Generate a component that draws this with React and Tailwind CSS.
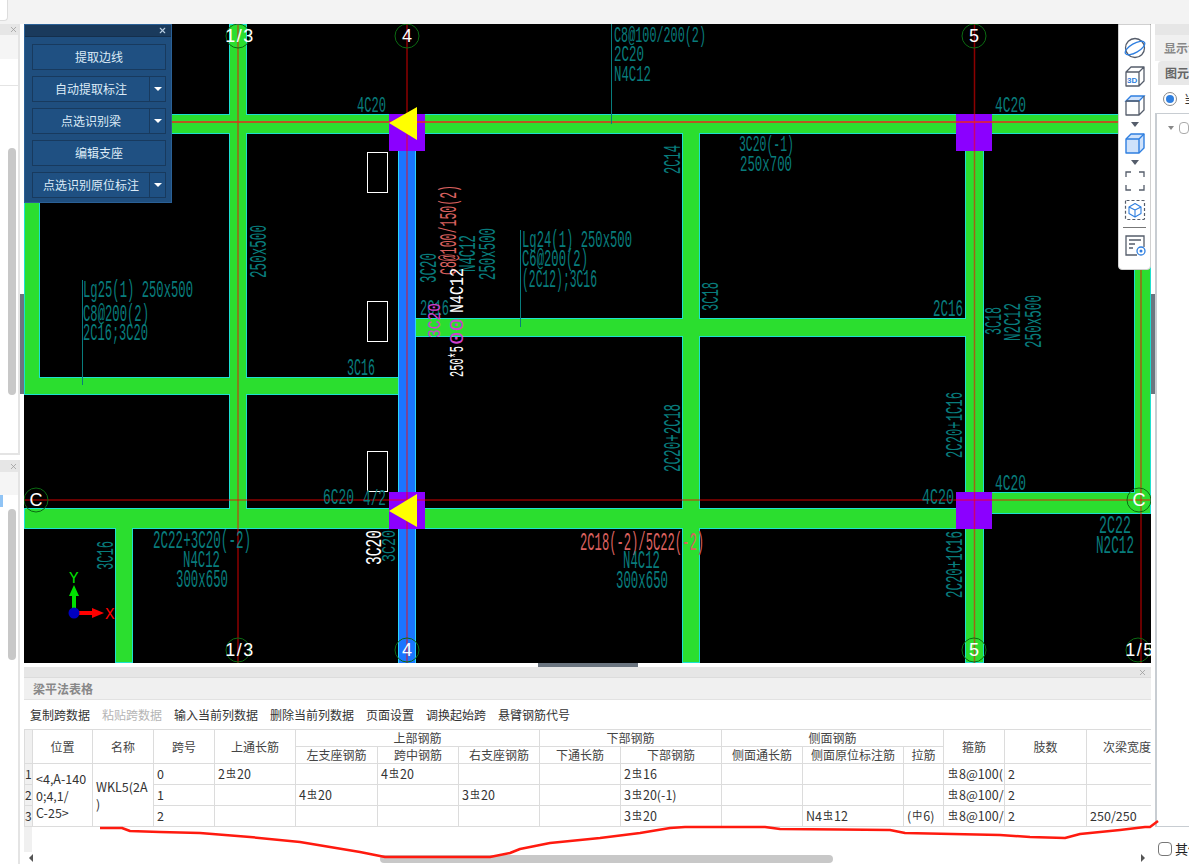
import { X } from "lucide-react";

const TEAL = "#087c7c";
const RED = "#d9605f";
const MAGENTA = "#d040d0";

// x, y, w, h in screen coordinates
const beams = [
  [24, 114, 1127, 20],
  [229, 24, 18, 505],
  [24, 130, 16, 265],
  [24, 377, 376, 18],
  [24, 508, 936, 21],
  [115, 525, 18, 138],
  [682, 130, 18, 533],
  [412, 318, 557, 19],
  [965, 130, 19, 533],
  [988, 492, 163, 22],
  [1134, 130, 17, 384],
];

// text, x0, x1, y0, y1
const labels = [
  ["4C20", 357, 386, 98, 112],
  ["4C20", 995, 1026, 98, 112],
  ["C8@100/200(2)", 614, 706, 27, 42],
  ["2C20", 614, 644, 46, 61],
  ["N4C12", 614, 651, 66, 81],
  ["3C20(-1)", 739, 794, 136, 151],
  ["250x700", 740, 792, 156, 171],
  ["Lg24(1) 250x500", 522, 632, 231, 247],
  ["C6@200(2)", 522, 588, 250, 266],
  ["(2C12);3C16", 522, 597, 270, 287],
  ["Lg25(1) 250x500", 83, 193, 281, 297],
  ["C8@200(2)", 83, 149, 305, 321],
  ["2C16;3C20", 83, 148, 324, 340],
  ["3C16", 347, 375, 359, 375],
  ["2C16", 933, 963, 300, 316],
  ["2C16", 420, 449, 300, 315],
  ["4C20", 995, 1026, 475, 490],
  ["4C20", 922, 954, 489, 504],
  ["6C20", 323, 354, 489, 504],
  ["4/2", 363, 386, 490, 505],
  ["2C22+3C20(-2)", 153, 251, 531, 548],
  ["N4C12", 183, 220, 551, 567],
  ["300x650", 176, 228, 570, 587],
  ["2C18(-2)/5C22(-2)", 580, 704, 533, 550, RED],
  ["N4C12", 623, 660, 551, 568],
  ["300x650", 616, 668, 571, 588],
  ["2C22", 1099, 1131, 516, 533],
  ["N2C12", 1096, 1134, 536, 553],
];

const sideLabels = [
  ["250x500", 250, 266, 225, 278],
  ["3C16", 97, 113, 541, 570],
  ["2C14", 664, 680, 145, 174],
  ["3C18", 702, 718, 282, 311],
  ["2C20+2C18", 664, 680, 404, 472],
  ["3C20", 420, 436, 253, 283],
  ["C8@100/150(2)", 440, 456, 185, 275, RED],
  ["N4C12", 459, 475, 235, 272],
  ["250x500", 479, 495, 228, 280],
  ["3C20", 428, 440, 303, 338, MAGENTA],
  ["N4C12", 450, 463, 268, 313, "#ffffff"],
  ["00", 450, 463, 318, 345, MAGENTA],
  ["250*5", 450, 463, 346, 377, "#ffffff"],
  ["3C20", 367, 381, 530, 565, "#ffffff"],
  ["3C20", 382, 395, 530, 562],
  ["3C18", 985, 1001, 307, 335],
  ["N2C12", 1004, 1020, 303, 341],
  ["250x500", 1025, 1041, 295, 348],
  ["2C20+1C16", 946, 962, 392, 458],
  ["2C20+1C16", 946, 962, 531, 598],
];

const axes = [
  ["1/3", 240, 36],
  ["4", 407, 36],
  ["5", 974, 36],
  ["C", 36, 500],
  ["C", 1139, 500],
  ["1/3", 240, 650],
  ["4", 407, 650],
  ["5", 974, 650],
  ["1/5", 1140, 650],
];

const CadText = ({ text, x0, x1, y0, y1, color, side }) => {
  const size = side ? x1 - x0 : y1 - y0;
  const len = side ? y1 - y0 : x1 - x0;
  const transform = side ? `translate(${x1},${y1}) rotate(-90)` : `translate(${x0},${y1})`;
  return (
    <text
      transform={transform}
      fontSize={size / 0.66}
      fill={color || TEAL}
      textLength={len}
      lengthAdjust="spacingAndGlyphs"
      className="font-['Liberation_Mono',monospace]"
    >
      {text}
    </text>
  );
};

const Drawing = () => (
  <svg viewBox="24 24 1127 639" className="block w-[1127px] h-[639px]">
    {beams.map(([x, y, w, h], i) => (
      <rect key={i} x={x} y={y} width={w} height={h} fill="#1de0d0" />
    ))}
    {beams.map(([x, y, w, h], i) => (
      <rect key={i} x={x + 1} y={y + 1} width={w - 2} height={h - 2} fill="#2bde2f" />
    ))}

    <rect x="398" y="150" width="18" height="513" fill="#28d4ff" />
    <rect x="399" y="150" width="16" height="513" fill="#1a75ff" />

    <rect x="367.5" y="152.5" width="20" height="40" fill="none" stroke="#fff" />
    <rect x="367.5" y="301.5" width="20" height="40" fill="none" stroke="#fff" />
    <rect x="367.5" y="451.5" width="20" height="40" fill="none" stroke="#fff" />

    <rect x="389" y="114" width="36" height="37" fill="#8b00ff" />
    <rect x="389" y="492" width="36" height="37" fill="#8b00ff" />
    <rect x="956" y="114" width="36" height="37" fill="#8b00ff" />
    <rect x="956" y="492" width="36" height="37" fill="#8b00ff" />

    <g stroke="#ff0000" strokeOpacity="0.55" strokeWidth="1.5">
      <line x1="238" y1="24" x2="238" y2="663" />
      <line x1="407" y1="24" x2="407" y2="663" />
      <line x1="974.5" y1="24" x2="974.5" y2="663" />
      <line x1="1141" y1="24" x2="1141" y2="663" />
      <line x1="24" y1="500" x2="1151" y2="500" />
    </g>
    <line x1="24" y1="122" x2="1151" y2="122" stroke="#e8281e" strokeWidth="1.5" />

    <polygon points="389,123 417,107 417,140" fill="#ffff00" />
    <polygon points="389,511 417,494 417,527" fill="#ffff00" />

    <g stroke={TEAL} strokeWidth="1">
      <line x1="611.5" y1="24" x2="611.5" y2="124" />
      <line x1="520.5" y1="230" x2="520.5" y2="327" />
      <line x1="82.5" y1="280" x2="82.5" y2="385" />
    </g>

    {labels.map(([text, x0, x1, y0, y1, color], i) => (
      <CadText key={i} text={text} x0={x0} x1={x1} y0={y0} y1={y1} color={color} />
    ))}
    {sideLabels.map(([text, x0, x1, y0, y1, color], i) => (
      <CadText key={i} side text={text} x0={x0} x1={x1} y0={y0} y1={y1} color={color} />
    ))}

    {axes.map(([text, x, y], i) => (
      <g key={i}>
        <circle cx={text.length > 1 ? x - 2 : x} cy={y} r="12" fill="none" stroke="#0b6b12" />
        <text
          x={x}
          y={y + 6}
          textAnchor="middle"
          fontSize="18"
          letterSpacing={text.length > 1 ? "1.5" : "0"}
          fill="#fff"
          className="font-['Liberation_Sans',sans-serif]"
        >
          {text}
        </text>
      </g>
    ))}

    <rect x="72" y="590" width="4" height="22" fill="#00e000" />
    <polygon points="74,585 69,596 79,596" fill="#00e000" />
    <rect x="74" y="611" width="20" height="4" fill="#ff0000" />
    <polygon points="104,613 92,608 92,618" fill="#ff0000" />
    <circle cx="74" cy="613" r="5.5" fill="#0000c0" />
    <text x="69" y="583" fontSize="16" fill="#00e000" className="font-['Liberation_Mono',monospace]">Y</text>
    <text x="105" y="619" fontSize="16" fill="#ff0000" className="font-['Liberation_Mono',monospace]">X</text>
  </svg>
);

const PanelButton = ({ label, menu }) => (
  <div className="flex h-[26px] border border-[#183a5e] bg-[#1f5082] text-[#dcebf7]">
    <div className="flex-1 flex items-center justify-center">{label}</div>
    {menu && (
      <div className="w-4 flex items-center justify-center border-l border-[#183a5e]">
        <div className="w-0 h-0 border-x-[4px] border-x-transparent border-t-[4px] border-t-white" />
      </div>
    )}
  </div>
);

const FloatPanel = () => (
  <div className="absolute left-0 top-0 w-[148px] h-[179px] border border-[#2a6096] bg-[#1f4e7e] text-[12px]">
    <div className="h-3 bg-[#1a3a5c] flex items-center justify-end pr-1 border-b border-[#142f4c]">
      <X size={9} color="#b8cde0" strokeWidth={3} />
    </div>
    <div className="flex flex-col gap-[6px] pt-[7px] pl-[7px] pr-[5px]">
      <PanelButton label="提取边线" />
      <PanelButton label="自动提取标注" menu />
      <PanelButton label="点选识别梁" menu />
      <PanelButton label="编辑支座" />
      <PanelButton label="点选识别原位标注" menu />
    </div>
  </div>
);

const Caret = () => (
  <div className="w-0 h-0 mt-[6px] border-x-[4px] border-x-transparent border-t-[5px] border-t-[#555d6b]" />
);

const Toolbar = () => (
  <div className="absolute right-0 top-0 w-[33px] h-[246px] bg-white border border-[#d0d0d0] rounded-b-sm flex flex-col items-center pt-[12px]">
    <svg viewBox="0 0 22 22" className="w-[22px] h-[22px]" fill="none">
      <circle cx="11" cy="11" r="9.5" stroke="#555d6b" strokeWidth="1.3" />
      <ellipse cx="11" cy="11" rx="11" ry="4.5" transform="rotate(-30 11 11)" stroke="#2f7fe0" strokeWidth="1.3" />
    </svg>
    <svg viewBox="0 0 22 22" className="w-[22px] h-[22px] mt-[6px]" fill="none" stroke="#555d6b" strokeWidth="1.3">
      <path d="M2 7 L7 2 H20 V16 L15 21 H2 Z M2 7 H15 V21 M15 7 L20 2" strokeLinejoin="round" />
      <text x="3" y="18" fontSize="8" fontWeight="700" fill="#2f7fe0" stroke="none" className="font-['Liberation_Sans',sans-serif]">3D</text>
    </svg>
    <svg viewBox="0 0 22 22" className="w-[22px] h-[22px] mt-[7px]" fill="none" stroke="#555d6b" strokeWidth="1.3">
      <path d="M2 7 L7 2 H20 L15 7 Z" fill="#cfe2fb" stroke="#2f7fe0" />
      <path d="M2 7 V21 H15 L20 16 V2 M15 7 V21 M2 7 H15" strokeLinejoin="round" />
    </svg>
    <Caret />
    <svg viewBox="0 0 22 22" className="w-[22px] h-[22px] mt-[5px]" fill="#cfe2fb" stroke="#2f7fe0" strokeWidth="1.4">
      <path d="M2 7 L7 2 H20 V16 L15 21 H2 Z" strokeLinejoin="round" />
      <path d="M2 7 H15 V21 M15 7 L20 2" fill="none" />
    </svg>
    <Caret />
    <svg viewBox="0 0 22 22" className="w-[22px] h-[22px] mt-[5px]" fill="none" stroke="#555d6b" strokeWidth="1.3">
      <path d="M2 7 V2 H7 M15 2 H20 V7 M20 15 V20 H15 M7 20 H2 V15" />
    </svg>
    <svg viewBox="0 0 22 22" className="w-[22px] h-[22px] mt-[7px]" fill="none">
      <rect x="1.5" y="1.5" width="19" height="19" rx="1" stroke="#555d6b" strokeWidth="1.2" strokeDasharray="3 2" />
      <path d="M11 4.5 L17 8 V14.5 L11 18 L5 14.5 V8 Z M5 8 L11 11 L17 8 M11 11 V18" stroke="#2f7fe0" strokeWidth="1.1" strokeLinejoin="round" />
    </svg>
    <div className="w-[23px] h-px bg-[#777] mt-[6px]" />
    <svg viewBox="0 0 22 22" className="w-[22px] h-[22px] mt-[6px]" fill="none" stroke="#555d6b" strokeWidth="1.3">
      <path d="M13 21 H2 V2 H20 V13" />
      <path d="M5 6 H17 M5 10 H11 M5 14 H9" />
      <circle cx="17" cy="17" r="4" stroke="#2f7fe0" />
      <circle cx="17" cy="17" r="1.5" fill="#2f7fe0" stroke="none" />
    </svg>
  </div>
);

const Bar = ({ n, tail }) => (
  <span>
    {n}
    <span className="text-[10px] leading-[10px] align-[2px] mx-px">虫</span>
    {tail}
  </span>
);

const th = "border border-[#dcdcdc] font-normal text-[12px] leading-[16px] text-[#444] text-center p-0 overflow-hidden whitespace-nowrap";
const td = "border border-[#dcdcdc] text-[12.5px] leading-[18px] text-[#333] px-[3px] py-0 h-[21px] overflow-hidden whitespace-nowrap";
const num = "border border-[#dcdcdc] bg-[#f0f0f0] text-[12px] leading-[18px] text-[#333] p-0 overflow-hidden";
const tall = "border border-[#dcdcdc] text-[12.5px] text-[#333] px-[3px] py-0 leading-[17px] whitespace-nowrap overflow-hidden";

const BeamTable = () => (
  <div className="h-[98px] overflow-hidden">
    <table className="table-fixed border-collapse w-[1143px]">
      <colgroup>
        <col className="w-[8px]" />
        <col className="w-[60px]" />
        <col className="w-[61px]" />
        <col className="w-[61px]" />
        <col className="w-[81px]" />
        <col className="w-[82px]" />
        <col className="w-[81px]" />
        <col className="w-[81px]" />
        <col className="w-[81px]" />
        <col className="w-[101px]" />
        <col className="w-[81px]" />
        <col className="w-[101px]" />
        <col className="w-[40px]" />
        <col className="w-[61px]" />
        <col className="w-[82px]" />
        <col className="w-[81px]" />
      </colgroup>
      <thead>
        <tr className="h-[17px]">
          <th rowSpan={2} className={`${th} bg-[#f0f0f0]`} />
          <th rowSpan={2} className={th}>位置</th>
          <th rowSpan={2} className={th}>名称</th>
          <th rowSpan={2} className={th}>跨号</th>
          <th rowSpan={2} className={th}>上通长筋</th>
          <th colSpan={3} className={th}>上部钢筋</th>
          <th colSpan={2} className={th}>下部钢筋</th>
          <th colSpan={3} className={th}>侧面钢筋</th>
          <th rowSpan={2} className={th}>箍筋</th>
          <th rowSpan={2} className={th}>肢数</th>
          <th rowSpan={2} className={th}>次梁宽度</th>
        </tr>
        <tr className="h-[17px]">
          <th className={th}>左支座钢筋</th>
          <th className={th}>跨中钢筋</th>
          <th className={th}>右支座钢筋</th>
          <th className={th}>下通长筋</th>
          <th className={th}>下部钢筋</th>
          <th className={th}>侧面通长筋</th>
          <th className={th}>侧面原位标注筋</th>
          <th className={th}>拉筋</th>
        </tr>
      </thead>
      <tbody>
        <tr>
          <td className={num}>1</td>
          <td rowSpan={3} className={tall}>
            &lt;4,A-140
            <br />
            0;4,1/
            <br />
            C-25&gt;
          </td>
          <td rowSpan={3} className={tall}>
            WKL5(2A
            <br />)
          </td>
          <td className={td}>0</td>
          <td className={td}><Bar n="2" tail="20" /></td>
          <td className={td} />
          <td className={td}><Bar n="4" tail="20" /></td>
          <td className={td} />
          <td className={td} />
          <td className={td}><Bar n="2" tail="16" /></td>
          <td className={td} />
          <td className={td} />
          <td className={td} />
          <td className={td}><Bar n="" tail="8@100(" /></td>
          <td className={td}>2</td>
          <td className={td} />
        </tr>
        <tr>
          <td className={num}>2</td>
          <td className={td}>1</td>
          <td className={td} />
          <td className={td}><Bar n="4" tail="20" /></td>
          <td className={td} />
          <td className={td}><Bar n="3" tail="20" /></td>
          <td className={td} />
          <td className={td}><Bar n="3" tail="20(-1)" /></td>
          <td className={td} />
          <td className={td} />
          <td className={td} />
          <td className={td}><Bar n="" tail="8@100/" /></td>
          <td className={td}>2</td>
          <td className={td} />
        </tr>
        <tr>
          <td className={num}>3</td>
          <td className={td}>2</td>
          <td className={td} />
          <td className={td} />
          <td className={td} />
          <td className={td} />
          <td className={td} />
          <td className={td}><Bar n="3" tail="20" /></td>
          <td className={td} />
          <td className={td}><Bar n="N4" tail="12" /></td>
          <td className={td}>(<span className="text-[10px] leading-[10px] align-[2px] mx-px">中</span>6)</td>
          <td className={td}><Bar n="" tail="8@100/" /></td>
          <td className={td}>2</td>
          <td className={td}>250/250</td>
        </tr>
      </tbody>
    </table>
  </div>
);

const BottomPanel = () => (
  <div className="mt-1 w-[1127px] h-[197px] flex flex-col bg-white">
    <div className="h-[11px] bg-[#e6e6e6] border-b border-[#dcdcdc] flex items-center justify-end pr-1">
      <X size={9} color="#999" />
    </div>
    <div className="h-[22px] bg-[#f0f0f0] border-b border-[#e2e2e2] flex items-center pl-[9px] text-[12px] font-bold text-[#888]">
      梁平法表格
    </div>
    <div className="h-[29px] flex items-center gap-3 pl-[6px] pt-px text-[12px] text-[#333]">
      <span>复制跨数据</span>
      <span className="text-[#b5b5b5]">粘贴跨数据</span>
      <span>输入当前列数据</span>
      <span>删除当前列数据</span>
      <span>页面设置</span>
      <span>调换起始跨</span>
      <span>悬臂钢筋代号</span>
    </div>
    <BeamTable />
    <div className="h-[25px] w-2 bg-[#f0f0f0]" />
    <div className="flex-1 relative">
      <div className="absolute left-[356px] top-[3px] w-[453px] h-2 rounded bg-[#c8c8c8]" />
      <div className="absolute left-[5px] top-[2px] w-0 h-0 border-y-[4px] border-y-transparent border-r-[4px] border-r-[#555]" />
      <div className="absolute right-[6px] top-[2px] w-0 h-0 border-y-[4px] border-y-transparent border-l-[4px] border-l-[#555]" />
    </div>
  </div>
);

const LeftStrip = () => (
  <div className="w-6 shrink-0 flex flex-col bg-white">
    <div className="w-5 h-[431px] border-r-2 border-b-2 border-[#e4e4e4] flex flex-col">
      <div className="h-[11px] bg-[#e6e6e6] flex items-center justify-end">
        <X size={9} color="#999" />
      </div>
      <div className="h-[24px] bg-[#f5f5f5]" />
      <div className="h-[27px] border-b border-[#e4e4e4]" />
      <div className="h-[62px]" />
      <div className="ml-2 w-2 h-[247px] rounded-full bg-[#c8c8c8]" />
    </div>
    <div className="w-5 mt-[5px] flex-1 border-r-2 border-[#e4e4e4] flex flex-col">
      <div className="h-3 bg-[#e6e6e6] flex items-center justify-end">
        <X size={9} color="#999" />
      </div>
      <div className="h-[23px] bg-[#f5f5f5]" />
      <div className="h-3 w-[3px] bg-[#90c4f5]" />
      <div className="ml-2 mt-[2px] w-2 h-[151px] rounded-full bg-[#c8c8c8]" />
    </div>
  </div>
);

const RightPanel = () => (
  <div className="flex-1 flex flex-col bg-white ml-1 overflow-hidden">
    <div className="h-[11px] bg-[#e6e6e6]" />
    <div className="h-[26px] bg-[#f0f0f0] pl-[9px] flex items-center text-[12px] font-bold text-[#888] whitespace-nowrap">
      显示设置
    </div>
    <div className="h-6 flex items-end bg-white">
      <div className="ml-[3px] h-6 flex-1 bg-[#e8e8e8] rounded-tl pl-[7px] flex items-center text-[12px] font-bold text-[#666] whitespace-nowrap">
        图元
      </div>
    </div>
    <div className="h-[29px] flex items-center pl-2 gap-[7px] border-b border-[#c8cdd2] text-[12px] text-[#333] whitespace-nowrap">
      <div className="w-[14px] h-[14px] shrink-0 rounded-full border border-[#888] flex items-center justify-center">
        <div className="w-2 h-2 rounded-full bg-[#2f7fe0]" />
      </div>
      当前
    </div>
    <div className="h-[713px] border-l-2 border-[#c8cdd2] pt-[8px] pl-[11px] flex items-start gap-[5px] border-b">
      <div className="w-0 h-0 mt-[4px] border-x-[3px] border-x-transparent border-t-[4px] border-t-[#888]" />
      <div className="w-[14px] h-[12px] border border-[#aaa] rounded-sm" />
    </div>
    <div className="flex items-center gap-[3px] pl-[3px] pt-[12px] text-[13px] text-[#222] whitespace-nowrap">
      <div className="w-[14px] h-[14px] shrink-0 border border-[#777] rounded-sm" />
      其他
    </div>
  </div>
);

const App = () => (
  <div className="relative w-[1189px] h-[864px] overflow-hidden bg-white flex flex-col font-['Noto_Sans_CJK_SC','Noto_Sans',sans-serif]">
    <div className="h-6 shrink-0 bg-[#f3f3f3]">
      <div className="w-2 h-[21px] bg-white border-r border-b border-[#ddd] rounded-br" />
    </div>
    <div className="flex flex-1 min-h-0">
      <LeftStrip />
      <div className="w-[1127px] shrink-0 flex flex-col">
        <div className="relative h-[639px] bg-black">
          <Drawing />
          <FloatPanel />
          <Toolbar />
        </div>
        <BottomPanel />
      </div>
      <RightPanel />
    </div>

    {/* splitter handles */}
    <div className="absolute left-[20px] top-[294px] w-1 h-[100px] bg-[#6b7580]" />
    <div className="absolute left-[1151px] top-[294px] w-1 h-[100px] bg-[#6b7580]" />
    <div className="absolute left-[538px] top-[663px] w-[100px] h-1 bg-[#6b7580]" />

    {/* hand drawn mark over the table */}
    <svg viewBox="0 0 1189 864" className="absolute inset-0 w-[1189px] h-[864px] pointer-events-none" fill="none">
      <polyline
        points="100,828 122,828 130,831 160,832 200,833 250,837 300,842 330,847 360,852 385,857 490,857 510,853 520,849 550,843 600,838 640,833 670,828 685,827 765,827 780,829 840,829.5 890,830 905,833 1000,835 1030,837 1065,838 1080,834 1120,830 1145,827 1150,827 1158,821"
        stroke="#ff1a0f"
        strokeWidth="2.5"
        strokeLinejoin="round"
      />
    </svg>
  </div>
);

export default App;
